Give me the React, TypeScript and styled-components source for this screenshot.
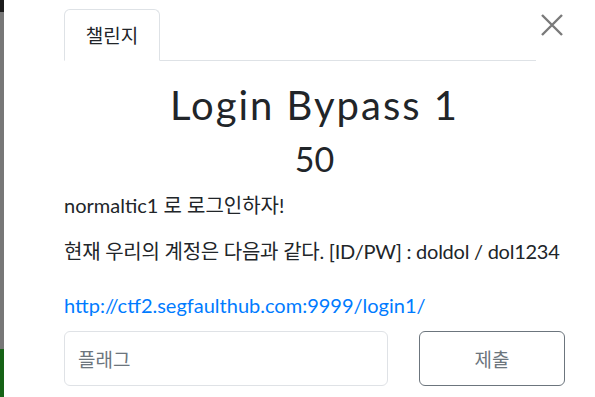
import React from "react";
import styled, { createGlobalStyle } from "styled-components";

const Global = createGlobalStyle`
  html, body { margin: 0; padding: 0; background: #fff; }
  body { font-family: Lato, "Noto Sans CJK KR", sans-serif; color: #212529; }
  * { box-sizing: border-box; }
`;

const Page = styled.div`
  display: flex;
  width: 595px;
  height: 397px;
  overflow: hidden;
`;

const Backdrop = styled.div`
  width: 4px;
  flex: none;
  display: flex;
  flex-direction: column;
`;

const Strip = styled.div<{ $color: string; $h?: number }>`
  background: ${(p) => p.$color};
  ${(p) => (p.$h ? `height: ${p.$h}px;` : "flex: 1;")}
`;

const Modal = styled.div`
  flex: 1;
  min-width: 0;
  padding: 9px 30px 0 60px;
  display: flex;
  flex-direction: column;
`;

const Header = styled.div`
  display: flex;
  align-items: flex-start;
`;

const Tabs = styled.div`
  width: 473px;
  display: flex;
  border-bottom: 1px solid #dee2e6;
`;

const Tab = styled.div`
  width: 96px;
  height: 52px;
  margin-bottom: -1px;
  padding-bottom: 2px;
  border: 1px solid #dee2e6;
  border-bottom-color: #fff;
  border-radius: 6px 6px 0 0;
  display: flex;
  align-items: center;
  justify-content: center;
  font-family: "Noto Sans CJK KR", sans-serif;
  font-size: 19px;
  color: #212529;
  background: #fff;
`;

const Close = styled.button`
  margin-left: 3px;
  margin-top: 3px;
  border: none;
  background: none;
  padding: 0;
  width: 26px;
  height: 26px;
  display: flex;
  align-items: center;
  justify-content: center;
`;

const Title = styled.h1`
  margin: 20px 0 0;
  text-align: center;
  font-family: Lato, sans-serif;
  font-weight: 400;
  font-size: 40px;
  line-height: 48px;
  letter-spacing: 2px;
`;

const Points = styled.h3`
  margin: 10px 0 0;
  text-align: center;
  font-family: Lato, sans-serif;
  font-weight: 400;
  font-size: 34px;
  line-height: 40px;
`;

const Desc = styled.div`
  margin-top: 11px;
  font-size: 20px;
  line-height: 30px;
  white-space: nowrap;
`;

const P = styled.p<{ $mb?: number; $ls?: number }>`
  margin: 0 0 ${(p) => p.$mb ?? 16}px;
  letter-spacing: ${(p) => p.$ls ?? 0}px;
`;

const Link = styled.a`
  color: #007bff;
  text-decoration: none;
`;

const FormRow = styled.div`
  margin-top: auto;
  margin-bottom: 11px;
  display: flex;
  justify-content: space-between;
`;

const Input = styled.input`
  width: 324px;
  height: 55px;
  border: 1px solid #dfe2e6;
  border-radius: 6px;
  padding: 0 13px;
  font-family: "Noto Sans CJK KR", sans-serif;
  font-size: 19px;
  color: #495057;
  &::placeholder { color: #6c757d; }
`;

const Submit = styled.button`
  width: 146px;
  height: 55px;
  border: 1px solid #6c757d;
  border-radius: 6px;
  background: #fff;
  color: #6c757d;
  font-family: "Noto Sans CJK KR", sans-serif;
  font-size: 19px;
`;

export default function App() {
  return (
    <>
      <Global />
      <Page>
        <Backdrop>
          <Strip $color="#1c1c1c" $h={12} />
          <Strip $color="#777777" />
          <Strip $color="#166316" $h={48} />
        </Backdrop>
        <Modal>
          <Header>
            <Tabs>
              <Tab>챌린지</Tab>
            </Tabs>
            <Close aria-label="close">
              <svg width="24" height="24" viewBox="0 0 24 24">
                <path d="M2 2 L22 22 M22 2 L2 22" stroke="#7a7a7a" strokeWidth="2.4" />
              </svg>
            </Close>
          </Header>
          <Title>Login Bypass 1</Title>
          <Points>50</Points>
          <Desc>
            <P>normaltic1 로 로그인하자!</P>
            <P $mb={24} $ls={-0.25}>현재 우리의 계정은 다음과 같다. [ID/PW] : doldol / dol1234</P>
            <P $mb={0}>
              <Link href="#">http://ctf2.segfaulthub.com:9999/login1/</Link>
            </P>
          </Desc>
          <FormRow>
            <Input placeholder="플래그" />
            <Submit>제출</Submit>
          </FormRow>
        </Modal>
      </Page>
    </>
  );
}
